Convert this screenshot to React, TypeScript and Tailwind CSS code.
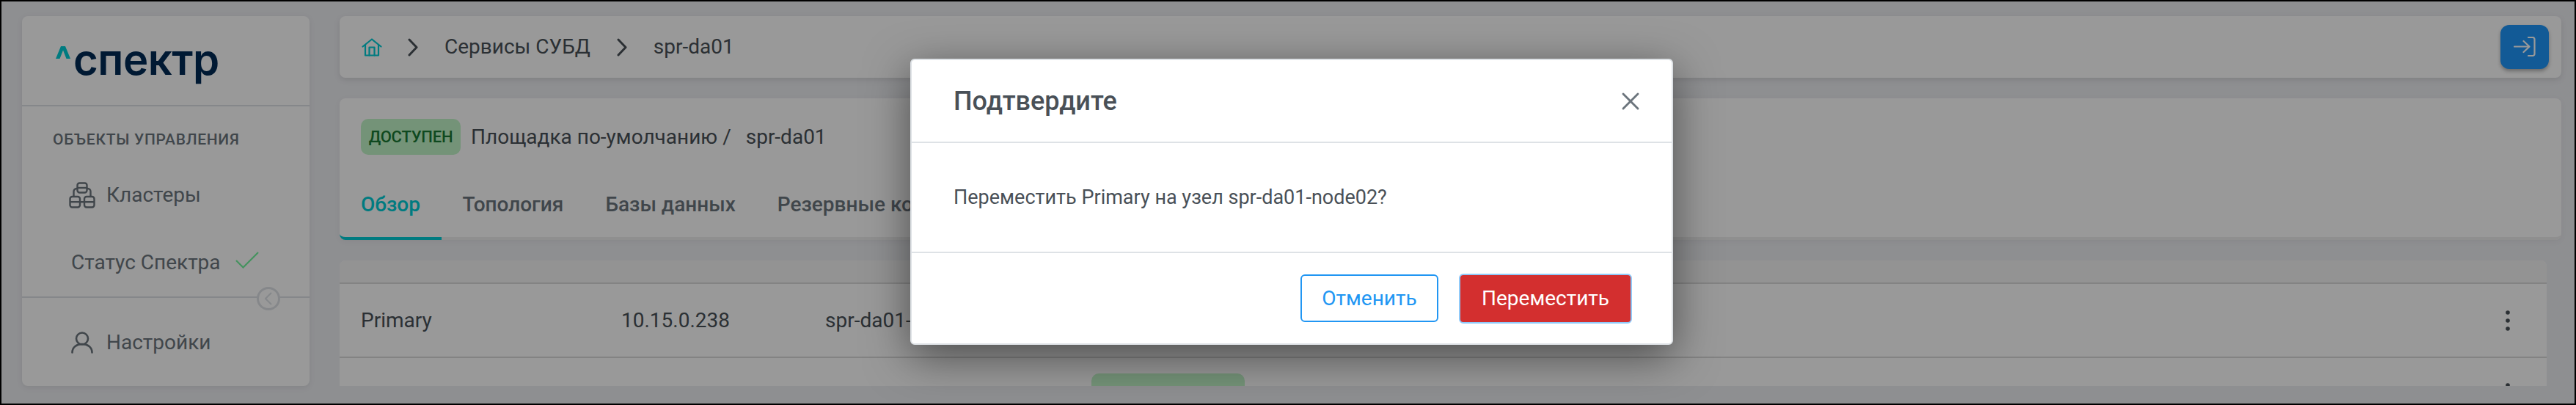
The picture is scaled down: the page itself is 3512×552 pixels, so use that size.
import { X } from "lucide-react";

function HomeIcon() {
  return (
    <svg width="28" height="25" viewBox="0 0 28 25" fill="none" stroke="#00cdd5" strokeWidth="2.2" strokeLinejoin="round" strokeLinecap="round">
      <path d="M1.500 11.500 14 1.500l12.500 10" />
      <path d="M5 9.500V23.500h18V9.500" />
      <path d="M10.500 23.500V12.500h7v11" />
    </svg>
  );
}

function Chevron() {
  return (
    <svg width="14" height="25" viewBox="0 0 14 25" fill="none" stroke="#495057" strokeWidth="3" strokeLinecap="round" strokeLinejoin="round">
      <path d="M2 2l10 10.500L2 23" />
    </svg>
  );
}

function ClusterIcon() {
  return (
    <svg width="36" height="36" viewBox="0 0 36 36" fill="none" stroke="#6c757d" strokeWidth="2.4" strokeLinejoin="round">
      <rect x="11.500" y="1.500" width="13" height="13" rx="3" />
      <path d="M11.500 8h13" />
      <path d="M6.500 20v-7a4 4 0 0 1 4-4h1M29.500 20v-7a4 4 0 0 0-4-4h-1" />
      <rect x="1.500" y="20" width="13.500" height="14.500" rx="3" />
      <path d="M1.500 27.200H15" />
      <rect x="21" y="20" width="13.500" height="14.500" rx="3" />
      <path d="M21 27.200h13.500M15 27.200h6" />
    </svg>
  );
}

function UserIcon() {
  return (
    <svg width="30" height="30" viewBox="0 0 30 30" fill="none" stroke="#6c757d" strokeWidth="2.6" strokeLinecap="round">
      <circle cx="15" cy="9.500" r="8" />
      <path d="M1.500 28.500c0-7.500 6-11.500 13.500-11.500s13.500 4 13.500 11.500" />
    </svg>
  );
}

function LoginIcon() {
  return (
    <svg width="30" height="28" viewBox="0 0 30 28" fill="none" stroke="#ffffff" strokeWidth="2.2" strokeLinecap="round" strokeLinejoin="round">
      <path d="M1 13.500h20M13.500 6l8 7.500-8 7.500" />
      <path d="M20 1h6a2.500 2.500 0 0 1 2.500 2.500v20A2.500 2.500 0 0 1 26 26h-6" />
    </svg>
  );
}

function Kebab() {
  return (
    <svg width="8" height="30" viewBox="0 0 8 30" fill="#495057" className="block">
      <circle cx="4" cy="4" r="2.800" />
      <circle cx="4" cy="15" r="2.800" />
      <circle cx="4" cy="26" r="2.800" />
    </svg>
  );
}

const tabs = ["Обзор", "Топология", "Базы данных", "Резервные копии"];

export default function App() {
  return (
    <div className="relative flex h-[552px] w-[3512px] gap-[41px] overflow-hidden border-2 border-black bg-[#edeef2] pt-[20px] pr-[18px] pb-[24px] pl-[28px] font-['Roboto',sans-serif] text-[28px] text-[#495057]">
      {/* Sidebar */}
      <aside className="relative flex w-[392px] shrink-0 flex-col rounded-lg bg-white text-[#6c757d] shadow-[0_2px_8px_rgba(0,0,0,0.08)]">
        <div className="flex h-[123px] items-start border-b-2 border-[#dee2e6] pt-[24px] pl-[46px]">
          <svg width="20" height="17" viewBox="0 0 20 17" className="mt-[17px] shrink-0" fill="#00cdd5">
            <path d="M7 0h6l7 17h-5.500L10 5.500 5.500 17H0z" />
          </svg>
          <span className="ml-[4px] font-['Inter',sans-serif] text-[58px] leading-[70px] font-semibold tracking-[-0.5px] text-[#002b55]">спектр</span>
        </div>
        <div className="h-[261px] border-b-2 border-[#dee2e6]">
          <div className="mt-[30px] pl-[42px] text-[21px] leading-[30px] font-medium tracking-[0.7px]">ОБЪЕКТЫ УПРАВЛЕНИЯ</div>
          <div className="mt-[31px] flex h-[60px] items-center gap-[15px] pl-[64px]">
            <ClusterIcon />
            <span>Кластеры</span>
          </div>
          <div className="mt-[32px] flex h-[60px] items-center gap-[20px] pl-[67px]">
            <span>Статус Спектра</span>
            <svg width="32" height="23" viewBox="0 0 32 23" fill="none" stroke="#73f59f" strokeWidth="2.2" className="-mt-[8px]">
              <path d="M1 12l9.500 9.500L31 1" />
            </svg>
          </div>
        </div>
        <div className="flex flex-1 items-center gap-[18px] pt-[2px] pl-[67px]">
          <UserIcon />
          <span>Настройки</span>
        </div>
        <button className="absolute top-[369px] left-[320px] flex h-[32px] w-[32px] items-center justify-center rounded-full border-[3px] border-[#dee2e6] bg-white">
          <svg width="10" height="18" viewBox="0 0 10 18" fill="none" stroke="#dee2e6" strokeWidth="2">
            <path d="M9 1L1 9l8 8" />
          </svg>
        </button>
      </aside>

      {/* Main */}
      <main className="flex min-w-0 flex-1 flex-col gap-[28px]">
        <div className="flex h-[84px] shrink-0 items-center rounded-lg bg-white pr-[17px] pl-[30px] shadow-[0_3px_8px_rgba(0,0,0,0.1)]">
          <HomeIcon />
          <span className="ml-[35px]"><Chevron /></span>
          <span className="ml-[36px]">Сервисы СУБД</span>
          <span className="ml-[36px]"><Chevron /></span>
          <span className="ml-[36px]">spr-da01</span>
          <button className="ml-auto flex h-[60px] w-[66px] items-center justify-center rounded-[12px] bg-[#1e96fa] shadow-[0_3px_5px_rgba(0,0,0,0.3)]">
            <LoginIcon />
          </button>
        </div>

        <div className="flex h-[193px] shrink-0 flex-col rounded-lg bg-white shadow-[0_2px_8px_rgba(0,0,0,0.05)]">
          <div className="flex items-center pt-[28px] pl-[29px]">
            <span className="flex h-[49px] w-[136px] items-center justify-center rounded-[10px] bg-[#c1f5c8] text-[22px] font-medium tracking-[-0.2px] text-[#1a7b35]">ДОСТУПЕН</span>
            <span className="ml-[14px]">Площадка по-умолчанию /</span>
            <span className="ml-[20px]">spr-da01</span>
          </div>
          <div className="mt-auto flex h-[92px] rounded-b-lg border-b-4 border-[#eeeeee]">
            {tabs.map((tab, i) => (
              <div
                key={tab}
                className={
                  i === 0
                    ? "-mb-[4px] flex items-center rounded-bl-lg border-b-4 border-[#00cdd5] px-[29px] font-medium text-[#00cdd5]"
                    : "flex items-center px-[28.500px] font-medium text-[#6c757d]"
                }
              >
                {tab}
              </div>
            ))}
          </div>
        </div>

        <div className="mr-[20px] min-h-0 flex-1 overflow-hidden rounded-t-lg bg-white">
          <div className="h-[32px] border-b-2 border-[#dbdbdb] bg-[#f5f5f5]" />
          <div className="flex h-[101px] items-center border-b-2 border-[#dbdbdb] pr-[49px] pl-[29px]">
            <span className="w-[355px]">Primary</span>
            <span className="w-[278px]">10.15.0.238</span>
            <span>spr-da01-node01</span>
            <span className="ml-auto"><Kebab /></span>
          </div>
          <div className="relative h-[100px]">
            <span className="absolute top-[21px] left-[1025px] h-[49px] w-[209px] rounded-[10px] bg-[#c1f5c8]" />
            <span className="absolute top-[33px] right-[49px]"><Kebab /></span>
          </div>
        </div>
      </main>

      {/* Dim + dialog */}
      <div className="absolute inset-0 bg-black/40" />
      <div className="absolute top-[78px] left-[1239px] flex h-[390px] w-[1040px] flex-col rounded-md border-2 border-[#dee2e6] bg-white shadow-[0_16px_60px_rgba(0,0,0,0.5)]">
        <div className="flex h-[113px] shrink-0 items-center justify-between border-b-2 border-[#dee2e6] pr-[36px] pl-[57px]">
          <span className="text-[36px] font-medium">Подтвердите</span>
          <X size={40} strokeWidth={1.7} className="text-[#6c757d]" />
        </div>
        <div className="flex h-[150px] shrink-0 items-center border-b-2 border-[#dee2e6] pl-[57px] text-[27px]">
          Переместить Primary на узел spr-da01-node02?
        </div>
        <div className="flex flex-1 items-center justify-end gap-[28px] pr-[54px]">
          <button className="flex h-[65px] w-[188px] items-center justify-center rounded-md border-2 border-[#2196f3] bg-white text-[#2196f3]">Отменить</button>
          <button className="flex h-[68px] w-[236px] items-center justify-center rounded-md border-2 border-[#90caf9] bg-[#d32f2f] text-white">Переместить</button>
        </div>
      </div>
    </div>
  );
}
